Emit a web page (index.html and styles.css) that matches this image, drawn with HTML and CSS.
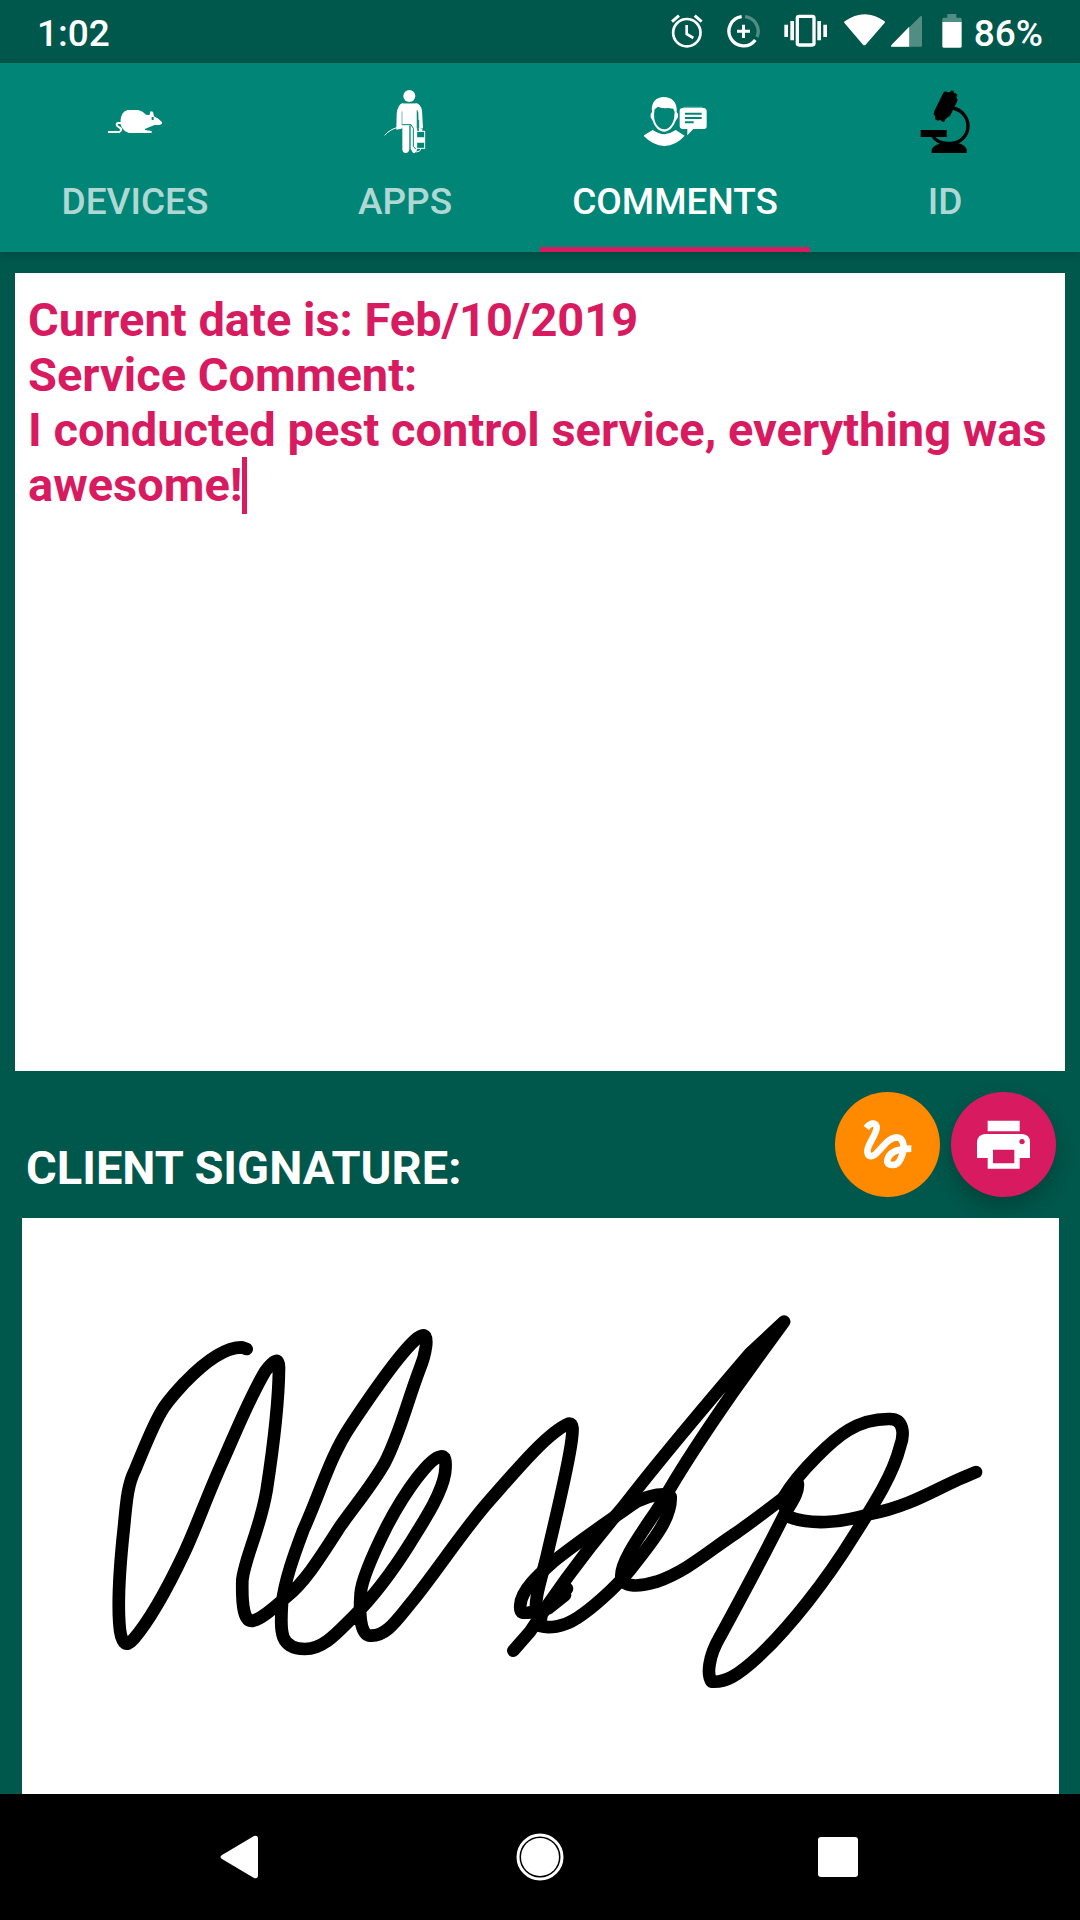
FILE: index.html
```html
<!DOCTYPE html>
<html lang="en">
<head>
<meta charset="utf-8">
<meta name="viewport" content="width=device-width, initial-scale=1">
<title>Service comments</title>
<link rel="stylesheet" href="styles.css">
</head>
<body>
<header class="status">
  <time class="clock">1:02</time>
  <div class="status-icons">
    <div class="notices">
      <svg class="ic-alarm" viewBox="92 44 96 100" fill="none" stroke="#fff" aria-hidden="true">
        <circle cx="139.500" cy="99" r="41" stroke-width="8"/>
        <path d="M139 76V103L159 115" stroke-width="8"/>
        <path d="M95 66L116 48M184 66L163 48" stroke-width="9"/>
      </svg>
      <svg class="ic-saver" viewBox="264 44 99 100" fill="none" stroke="#fff" stroke-width="10" aria-hidden="true">
        <path d="M308 51A44 44 0 1 0 349 121"/>
        <path d="M318 51A44 44 0 0 1 354 112" opacity=".32"/>
        <path d="M294 95H333M313.500 75V115" stroke-width="9"/>
      </svg>
      <svg class="ic-vibrate" viewBox="430 44 129 100" aria-hidden="true">
        <rect x="470" y="50" width="50" height="86" rx="5" fill="none" stroke="#fff" stroke-width="10"/>
        <path d="M431 75h11v37h-11zM449 64h11v58h-11zM530 64h11v58h-11zM548 75h11v37h-11z" fill="#fff"/>
      </svg>
    </div>
    <div class="radios">
      <svg class="ic-wifi" viewBox="612 42 123 102" fill="#fff" aria-hidden="true">
        <path d="M614 64Q674 21 734 64Q736 67 733 70L677 134Q673 138 669 134L614 70Q611 67 614 64Z"/>
      </svg>
      <svg class="ic-signal" viewBox="752 42 94 102" fill="#fff" aria-hidden="true">
        <path d="M753 141Q751 138 755 134L838 51Q846 44 846 52V136Q846 141 842 141Z" opacity=".32"/>
        <path d="M753 141Q751 138 755 134L807 80V141Z"/>
      </svg>
    </div>
    <div class="power">
      <svg class="ic-battery" viewBox="905 42 60 102" fill="#fff" aria-hidden="true">
        <path d="M921 42H948V53H960Q964 53 964 57V66H906V57Q906 53 910 53H921Z" opacity=".32"/>
        <path d="M906 66H964V139Q964 143 960 143H910Q906 143 906 139Z"/>
      </svg>
      <span class="percent">86%</span>
    </div>
  </div>
</header>

<nav class="tabs" role="tablist">
  <button class="tab" role="tab" aria-selected="false">
    <svg class="tab-icon" viewBox="40 30 189 189" fill="#fff" aria-hidden="true">
      <path d="M90 128C88 108 98 92 112 90H142C152 92 160 98 166 104L177 105L179 94L187 95L190 109L203 116L214 126V131L207 135H192L175 142L163 147V150L183 153V159H118C104 157 94 146 90 134Z"/>
      <path d="M92 129H82Q75 132 80 138L91 146Q93 152 86 156H52" fill="none" stroke="#fff" stroke-width="6"/>
      <path d="M183 111h6v9h-6z" fill="#008577"/>
    </svg>
    <span>DEVICES</span>
  </button>
  <button class="tab" role="tab" aria-selected="false">
    <svg class="tab-icon" viewBox="11 30 189 189" fill="#fff" aria-hidden="true">
      <circle cx="117" cy="48" r="18"/>
      <path d="M98 69H136Q152 72 155 92L158 145L145 148L144 98L140 90L141 208Q136 222 128 218L121 208V136H117V206Q116 219 106 219Q96 219 96 206V142L94 146L78 149L79 102Q82 72 98 69Z"/>
      <path d="M95 94V132M140 90V145M98 70H136" stroke="#008577" stroke-width="2" opacity=".8"/>
      <path d="M94 134H122L129 145V199L136 207M145 120V144" fill="none" stroke="#008577" stroke-width="3"/>
      <path d="M98 138Q60 145 43 166" fill="none" stroke="#fff" stroke-width="3"/>
      <rect x="139" y="154" width="24" height="51" fill="#008577" stroke="#fff" stroke-width="3"/>
      <path d="M140 172h23v16h-23zM146 147h10v7h-10z"/>
      <path d="M152 206Q150 216 137 216" fill="none" stroke="#fff" stroke-width="3"/>
    </svg>
    <span>APPS</span>
  </button>
  <button class="tab tab-active" role="tab" aria-selected="true">
    <svg class="tab-icon" viewBox="40 30 189 189" fill="#fff" aria-hidden="true">
      <path d="M64 96C60 66 78 51 99 51C122 51 141 66 138 96L142 102V112L135 122C128 142 114 154 101 155C86 154 72 142 66 122L60 112V102Z"/>
      <path d="M70 102L72 88L82 80Q96 86 112 84L128 86L132 96L130 116C124 138 112 148 101 148C88 148 76 138 71 118Z" fill="#008577"/>
      <path d="M38 167L66 150Q84 162 101 163Q118 162 135 150L162 167Q136 197 101 198Q66 197 38 167Z"/>
      <path d="M156 84H221Q228 86 228 92V139Q228 147 220 147H188L170 166V147H156Q147 146 147 138V92Q147 85 156 84Z"/>
      <path d="M158 82H216" stroke="#fff" stroke-width="3" opacity=".5"/>
      <path d="M163 101H213M163 114H213M163 127H189" stroke="#008577" stroke-width="6"/>
    </svg>
    <span>COMMENTS</span>
  </button>
  <button class="tab" role="tab" aria-selected="false">
    <svg class="tab-icon" viewBox="40 30 189 189" aria-hidden="true">
      <path d="M128 38L134 34L142 37L148 36L153 31L159 34V38L165 40L170 45L167 52L171 59L169 65L148 108L141 112L134 118L131 125H125L120 120L111 122L103 117L104 110L99 103L101 93Z"/>
      <path d="M156 84C184 90 202 112 202 138C202 164 182 190 150 190C120 192 104 182 97 168" fill="none" stroke="#000" stroke-width="10"/>
      <path d="M60 150H138V171H60Z"/>
      <path d="M93 219V207Q99 198 108 194L122 189H172L186 194Q194 199 198 208V219Z"/>
    </svg>
    <span>ID</span>
  </button>
</nav>

<main class="content">
  <div class="comment">
    <textarea class="comment-text" aria-label="Service comment" spellcheck="false">Current date is: Feb/10/2019
Service Comment:
I conducted pest control service, everything was awesome!</textarea>
    <span class="caret"></span>
  </div>

  <div class="sign-bar">
    <h2 class="sign-title">CLIENT SIGNATURE:</h2>
    <div class="actions">
      <button class="fab fab-sign" aria-label="Clear signature">
        <svg viewBox="0 0 315 315" aria-hidden="true">
          <path d="M94 108C104 94 122 88 125 104C128 124 94 160 97 180C100 198 116 194 126 182C148 160 160 138 184 136C208 136 212 172 196 202C184 228 154 220 157 206C160 186 180 170 229 170" fill="none" stroke="#fff" stroke-width="20"/>
        </svg>
      </button>
      <button class="fab fab-print" aria-label="Print">
        <svg viewBox="0 0 315 315" fill="#fff" aria-hidden="true">
          <path d="M110 86H206V118H110Z"/>
          <path fill-rule="evenodd" d="M102 126H213Q237 128 237 150V198H206V230H110V198H78V150Q80 128 102 126ZM126 173V214H190V173ZM213 141a8 8 0 1 0 .1 0Z"/>
        </svg>
      </button>
    </div>
  </div>

  <div class="pad">
    <svg class="ink" viewBox="-204 -246 3111 1728" preserveAspectRatio="xMidYMin meet" role="img" aria-label="Signature">
      <path d="M470 147L455 142C400 142 340 190 285 247C250 285 230 305 212 338C185 385 160 450 135 510C115 550 110 590 102 680C90 790 83 900 88 970C92 1030 108 1045 130 1018C180 960 230 870 282 760C320 680 350 590 400 480C440 390 480 290 525 215C550 180 568 170 567 205C566 300 550 440 530 570C510 690 465 770 457 840C455 920 462 967 490 962C520 955 560 915 590 890C640 850 680 790 750 680C800 610 850 550 885 487C930 400 950 310 990 205C1008 160 1015 110 1003 107C980 95 890 215 780 380C720 470 690 580 640 690C610 770 585 840 576 910C570 1000 570 1045 645 1047C700 1047 740 1000 790 950C860 880 910 810 960 730C1010 650 1055 580 1065 520C1070 480 1065 465 1050 470C1020 475 950 565 890 680C850 760 815 840 812 880C808 930 808 1005 840 1007C890 1010 920 960 970 900C1050 800 1120 690 1200 600C1280 510 1370 400 1435 371C1452 367 1448 395 1445 420C1435 500 1400 640 1370 770C1350 850 1335 890 1338 935"/>
      <g transform="translate(1170 0)">
        <path d="M165 935C130 940 118 945 121 915C123 870 180 820 220 785C300 720 420 640 470 605C510 585 560 575 572 590C575 650 530 710 450 810C400 870 330 930 290 955C250 982 205 985 180 978L185 940L261 866M205 925L255 885"/>
        <path d="M100 1052L150 995C250 840 340 725 430 620C530 490 690 300 810 160L912 65L760 275C680 390 600 510 550 600C500 680 420 780 424 830C430 865 480 860 530 845C620 815 690 750 770 698C830 655 890 610 950 562"/>
        <path d="M912 590C930 560 970 510 1010 470C1070 410 1130 355 1230 357C1270 357 1275 400 1260 440C1240 520 1190 600 1120 710C1040 840 930 980 840 1065C770 1130 735 1148 695 1145C680 1125 685 1070 720 1010C780 900 850 770 915 640C940 600 960 570 952 545L930 565L910 610L925 650C990 675 1080 670 1170 642C1290 620 1370 565 1450 532L1488 516"/>
      </g>
    </svg>
  </div>
</main>

<footer class="system-nav">
  <button aria-label="Back"><svg viewBox="0 0 48 48" aria-hidden="true"><path d="M5 22L37 3Q41 2 41 6V42Q41 46 37 45L5 26Q2 24 5 22Z" fill="#fff"/></svg></button>
  <button aria-label="Home"><svg viewBox="0 0 48 48" aria-hidden="true"><circle cx="24" cy="24" r="22" fill="none" stroke="#fff" stroke-width="3"/><circle cx="24" cy="24" r="19" fill="#fff"/></svg></button>
  <button aria-label="Recent apps"><svg viewBox="0 0 48 48" aria-hidden="true"><rect x="3" y="4" width="40" height="40" rx="3" fill="#fff"/></svg></button>
</footer>
</body>
</html>
```
FILE: styles.css
```css
* {
  box-sizing: border-box;
}

body {
  margin: 0;
  min-height: 100vh;
  display: flex;
  flex-direction: column;
  background: #00574b;
  color: #fff;
  font-family: Roboto, "Liberation Sans", sans-serif;
}

button {
  margin: 0;
  padding: 0;
  border: 0;
  background: none;
  color: inherit;
  font: inherit;
}

svg {
  display: block;
}

/* Status bar */
.status {
  display: flex;
  justify-content: space-between;
  padding: 12px 37px 7px;
  font-size: 37px;
  font-weight: 500;
  line-height: 44px;
}

.status-icons,
.notices,
.radios,
.power {
  display: flex;
}

.status-icons {
  gap: 17px;
}

.status-icons svg {
  height: 34px;
  margin-top: 2px;
}

.notices {
  gap: 24px;
}

.radios {
  gap: 6px;
}

.power {
  gap: 12px;
  padding-left: 3px;
}

.ic-alarm {
  width: 32px;
}

.ic-saver {
  width: 33px;
}

.ic-vibrate {
  width: 43px;
}

.ic-wifi {
  width: 41px;
}

.ic-signal {
  width: 31px;
}

.ic-battery {
  width: 20px;
}

/* Tabs */
.tabs {
  display: grid;
  grid-template-columns: repeat(4, 1fr);
  background: #008577;
  box-shadow: 0 2px 8px rgba(0, 0, 0, 0.2);
}

.tab {
  display: flex;
  flex-direction: column;
  align-items: center;
  gap: 27px;
  padding: 27px 0 23px;
  border-bottom: 5px solid transparent;
  color: rgba(255, 255, 255, 0.7);
  font-size: 37px;
  font-weight: 500;
  line-height: 44px;
}

.tab-active {
  border-color: #d81b60;
  color: #fff;
}

.tab-icon {
  width: 63px;
  height: 63px;
}

/* Content */
.content {
  flex: 1;
  display: flex;
  flex-direction: column;
  padding: 21px 15px 0;
}

.comment {
  position: relative;
  height: 798px;
}

.comment-text {
  display: block;
  width: 100%;
  height: 100%;
  margin: 0;
  padding: 19px 13px;
  border: 0;
  outline: 0;
  resize: none;
  background: #fff;
  color: #d81b60;
  font: 700 47px/55px Roboto, "Liberation Sans", sans-serif;
}

.caret {
  position: absolute;
  left: 227px;
  top: 184px;
  width: 5px;
  height: 57px;
  background: #d81b60;
}

.sign-bar {
  display: flex;
  justify-content: space-between;
  align-items: flex-end;
  padding: 21px 9px 21px 11px;
}

.sign-title {
  margin: 0;
  padding-bottom: 2px;
  font-size: 47px;
  font-weight: 700;
  line-height: 55px;
}

.actions {
  display: flex;
  gap: 11px;
}

.fab {
  width: 105px;
  height: 105px;
  border-radius: 50%;
}

.fab-sign {
  background: #ff8a00;
}

.fab-print {
  background: #d81b60;
  box-shadow: 0 10px 20px rgba(0, 0, 0, 0.22);
}

.pad {
  flex: 1;
  margin: 0 6px 0 7px;
  background: #fff;
}

.ink {
  width: 100%;
  fill: none;
  stroke: #000;
  stroke-width: 38;
  stroke-linecap: round;
  stroke-linejoin: round;
}

/* System navigation */
.system-nav {
  display: grid;
  grid-template-columns: repeat(3, 1fr);
  padding: 39px 91px;
  background: #000;
}

.system-nav button {
  display: flex;
  justify-content: center;
}

.system-nav svg {
  width: 48px;
  height: 48px;
}
```
